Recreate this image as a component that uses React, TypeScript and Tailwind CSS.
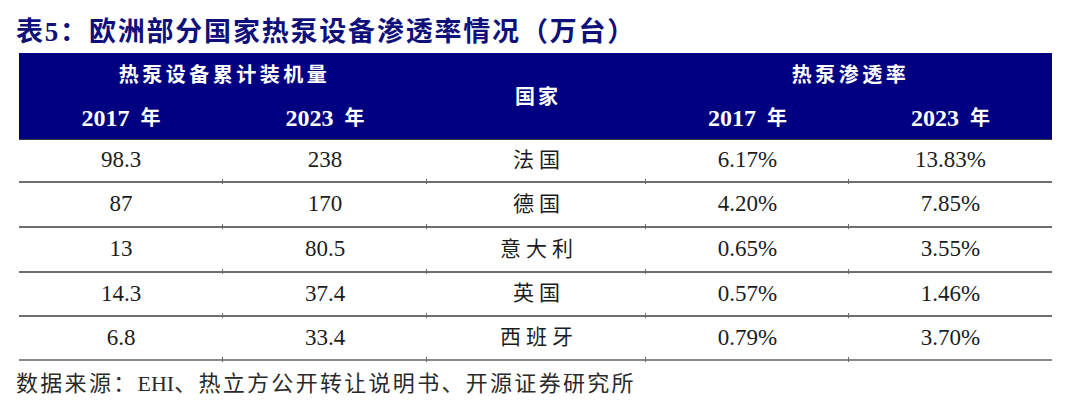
const FONT = "font-['Liberation_Serif','Noto_Sans_CJK_SC',serif]";

const rows = [
  { a: "98.3", b: "238", country: "法国", c: "6.17%", d: "13.83%", h: "h-[43px]" },
  { a: "87", b: "170", country: "德国", c: "4.20%", d: "7.85%", h: "h-[45px]" },
  { a: "13", b: "80.5", country: "意大利", c: "0.65%", d: "3.55%", h: "h-[45px]" },
  { a: "14.3", b: "37.4", country: "英国", c: "0.57%", d: "1.46%", h: "h-[44px]" },
  { a: "6.8", b: "33.4", country: "西班牙", c: "0.79%", d: "3.70%", h: "h-[44px]" },
];

// 列幅は元画像の罫線位置から測った値
const GRID = "grid grid-cols-[204px_204px_219px_203px_203px]";

function Tick() {
  // 罫線上の列区切りに出ている小さな縦の目印
  return <span className="absolute right-0 -bottom-[3px] h-[5px] w-px bg-[#6b6b6b]" />;
}

function Cell({ children, last, cjk }: { children: React.ReactNode; last?: boolean; cjk?: boolean }) {
  return (
    <div className="relative flex items-center justify-center">
      <span className={cjk ? "pl-[5px] tracking-[5px] text-[21px]" : "text-[23px]"}>{children}</span>
      {!last && <Tick />}
    </div>
  );
}

function YearLabel({ year }: { year: string }) {
  return (
    <div className="flex items-center justify-center gap-[11px] font-bold">
      <span className="text-[24px]">{year}</span>
      <span className="text-[20px]">年</span>
    </div>
  );
}

export default function App() {
  return (
    <div className={`h-[411px] w-[1080px] overflow-hidden bg-white ${FONT}`}>
      <div className="flex h-[53px] items-center pl-[16px] pt-[12px]">
        <h1 className="text-[27px] font-bold leading-none tracking-[1.8px] text-[#10107a]">
          表5：欧洲部分国家热泵设备渗透率情况（万台）
        </h1>
      </div>

      <div className="ml-[19px] w-[1033px]">
        <div className={`${GRID} h-[87px] grid-rows-[43px_44px] border-b border-[#3a3a3a] bg-[#000080] text-white`}>
          <div className="col-span-2 flex items-center justify-center pl-[3px] text-[20px] font-bold tracking-[3.5px]">
            热泵设备累计装机量
          </div>
          <div className="row-span-2 flex items-center justify-center pl-[3px] text-[20px] font-bold tracking-[3px]">
            国家
          </div>
          <div className="col-span-2 flex items-center justify-center pl-[3px] text-[20px] font-bold tracking-[3.5px]">
            热泵渗透率
          </div>
          <YearLabel year="2017" />
          <YearLabel year="2023" />
          <YearLabel year="2017" />
          <YearLabel year="2023" />
        </div>

        {rows.map((r, i) => (
          <div
            key={r.country}
            className={`${GRID} ${r.h} border-b-2 text-[#1c1c1c] ${
              i === rows.length - 1 ? "border-[#8a8a8a]" : "border-[#6e6e6e]"
            }`}
          >
            <Cell>{r.a}</Cell>
            <Cell>{r.b}</Cell>
            <Cell cjk>{r.country}</Cell>
            <Cell>{r.c}</Cell>
            <Cell last>{r.d}</Cell>
          </div>
        ))}
      </div>

      <div className="flex h-[44px] items-center pl-[16px] text-[22px] tracking-[2.3px] text-[#2a2a2a]">
        数据来源：<span className="tracking-normal">EHI</span>、热立方公开转让说明书、开源证券研究所
      </div>
    </div>
  );
}
